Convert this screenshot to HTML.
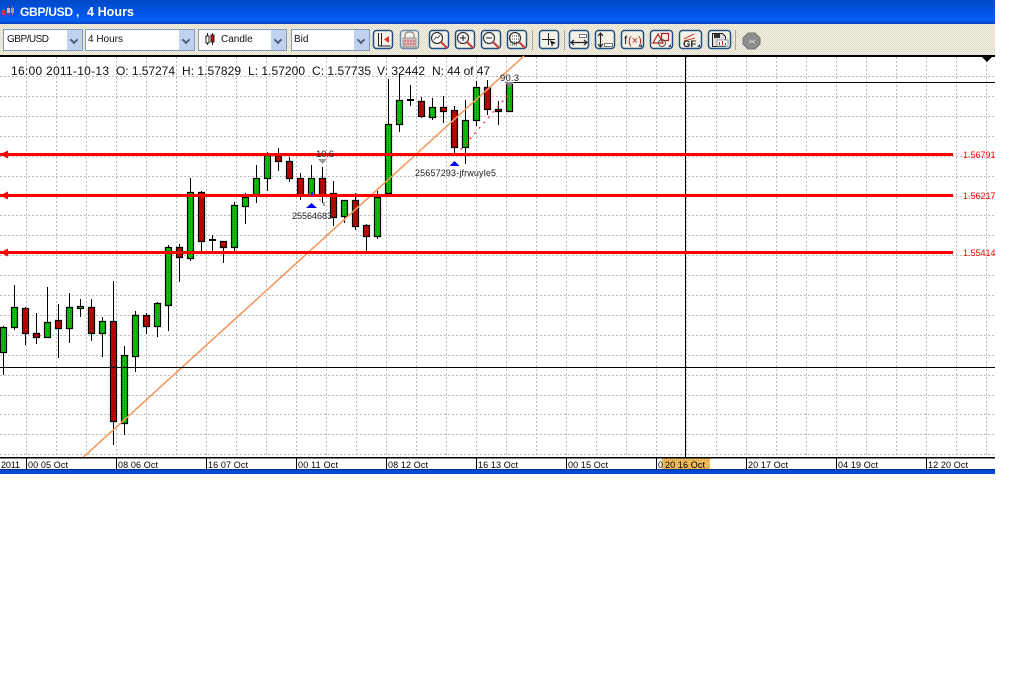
<!DOCTYPE html>
<html><head><meta charset="utf-8"><style>
html,body{margin:0;padding:0;background:#fff;width:1018px;height:689px;overflow:hidden}
#t{position:absolute;left:0;top:0;width:995px;height:24px;background:linear-gradient(#0048c8 0,#0050dc 8px,#0058ee 16px,#0a60f4 20px,#0040c0 24px)}
#b{position:absolute;left:0;top:24px;width:995px;height:31px;background:repeating-conic-gradient(#f6f3e6 0 25%,#dedac8 0 50%) 0 0/2px 2px;border-bottom:1px solid #999}
svg{position:absolute;left:0;top:0}
text{font-family:"Liberation Sans",sans-serif}
.c{position:absolute;top:29px;height:20px;background:#fff;border:1px solid #7f9db9;font:10px/20px "Liberation Sans",sans-serif;color:#111;padding-left:2px;box-sizing:content-box}
.c i{position:absolute;right:0;top:0;width:15px;height:20px;background:#c1d2ee}
.c i:after{content:"";position:absolute;left:4px;top:7px;width:4px;height:4px;border:solid #4d6185;border-width:0 2px 2px 0;transform:rotate(45deg)}
</style></head><body>
<div id="t"></div><div id="b"></div>
<div class="c" style="left:3px;width:75px;padding-left:3px"><span style="letter-spacing:-.5px">GBP/USD</span><i></i></div>
<div class="c" style="left:85px;width:106px">4 Hours<i></i></div>
<div class="c" style="left:198px;width:65px;padding-left:22px">Candle<i></i></div>
<div class="c" style="left:291px;width:75px">Bid<i></i></div>
<svg width="1018" height="689" viewBox="0 0 1018 689">
<defs>
<pattern id="g" width="2" height="2" patternUnits="userSpaceOnUse"><rect width="2" height="2" fill="#00c400"/><rect width="1" height="1" fill="#009a00"/><rect x="1" y="1" width="1" height="1" fill="#00d000"/></pattern>
<pattern id="r" width="2" height="2" patternUnits="userSpaceOnUse"><rect width="2" height="2" fill="#c80000"/><rect width="1" height="1" fill="#980000"/><rect x="1" y="1" width="1" height="1" fill="#d40000"/></pattern>
<pattern id="o" width="2" height="2" patternUnits="userSpaceOnUse"><rect width="2" height="2" fill="#f2c060"/><rect width="1" height="1" fill="#d8a040"/></pattern>
</defs>
<!-- title -->
<g fill="none" stroke-width="1"><path d="M3.500 8v9M8.500 6v9" stroke="#b04040"/><path d="M12.500 6v9" stroke="#888"/></g>
<rect x="2" y="10" width="3" height="5" fill="#e03030"/><rect x="7" y="8" width="3" height="5" fill="#d0b0b0"/><rect x="11" y="8" width="3" height="5" fill="#b0a080"/>
<text x="20" y="16" fill="#fff" font-size="12" font-weight="bold" textLength="53">GBP/USD</text>
<text x="76" y="16" fill="#fff" font-size="12" font-weight="bold">,</text>
<text x="87" y="16" fill="#fff" font-size="12.500" font-weight="bold" textLength="47">4 Hours</text>
<!-- candle icon in combo -->
<path d="M207.500 33v12M212.500 33v12" stroke="#222"/><rect x="206" y="36" width="3" height="7" fill="#fff" stroke="#222"/><rect x="211" y="35" width="3" height="7" fill="#d00000" stroke="#222"/>
<!-- toolbar separators -->
<path d="M532.500 30v20M564.500 30v20M735.500 30v20" stroke="#aaa"/>
<!-- toolbar buttons -->
<g fill="#f4f2e6" stroke="#1f4f86" stroke-width="1.500">
<rect x="373.500" y="30.500" width="19" height="18" rx="3"/><rect x="400.500" y="30.500" width="18" height="18" rx="3" stroke="#6a8cae"/>
<rect x="429.500" y="30.500" width="19" height="18" rx="3"/><rect x="455.500" y="30.500" width="19" height="18" rx="3"/>
<rect x="481.500" y="30.500" width="19" height="18" rx="3"/><rect x="507.500" y="30.500" width="19" height="18" rx="3"/>
<rect x="539.500" y="30.500" width="19" height="18" rx="3"/><rect x="569.500" y="30.500" width="19" height="18" rx="3"/>
<rect x="595.500" y="30.500" width="19" height="18" rx="3"/><rect x="621.500" y="30.500" width="22" height="18" rx="3"/>
<rect x="650.500" y="30.500" width="22" height="18" rx="3"/><rect x="679.500" y="30.500" width="22" height="18" rx="3"/>
<rect x="708.500" y="30.500" width="22" height="18" rx="3"/>
</g>
<!-- icon 1 -->
<path d="M378.500 33v13h12M381.500 33v13" fill="none" stroke="#222"/><path d="M389 36v7l-5-3.500z" fill="#e03030"/>
<!-- lock -->
<path d="M405 38v-3q0-3 4.500-3t4.500 3v3" fill="none" stroke="#999" stroke-width="1.500"/><rect x="403" y="38" width="13" height="9" fill="#d8b8b8" stroke="#999"/><path d="M404 41h11M404 44h11" stroke="#d05050" stroke-dasharray="2 1"/>
<!-- magnifiers -->
<g fill="#fff" stroke="#333" stroke-width="1.200"><circle cx="437" cy="38" r="5.500"/><circle cx="463" cy="38" r="5.500"/><circle cx="489" cy="38" r="5.500"/><circle cx="515" cy="38" r="5.500"/></g>
<g stroke="#d04040" stroke-width="2.200"><path d="M441 42l6 6M467 42l6 6M493 42l6 6M519 42l6 6"/></g>
<path d="M434 40l2-3 2 1 2-3" fill="none" stroke="#555"/>
<path d="M460 38h6M463 35v6M486 38h6" stroke="#111"/>
<path d="M510 36h10M510 39h10M510 42h10M510 45h8" stroke="#333" stroke-dasharray="1 1"/>
<!-- crosshair -->
<path d="M548.500 33v12M542 39.500h13" stroke="#222"/><path d="M550 40l6 3-3 1-1 3z" fill="#222"/>
<!-- h/v -->
<path d="M571 42.500h16M574 40l-3 2.500 3 2.500M584 40l3 2.500-3 2.500" fill="none" stroke="#222" stroke-width="1.200"/><rect x="579.500" y="34.500" width="7" height="3" fill="#fff" stroke="#777"/>
<path d="M600.500 33v14M598 36l2.500-3 2.500 3M598 44l2.500 3 2.500-3" fill="none" stroke="#222" stroke-width="1.200"/><rect x="604.500" y="43.500" width="8" height="3" fill="#fff" stroke="#777"/>
<text x="624" y="44" font-size="12" fill="#222">f</text><text x="628" y="44" font-size="11" fill="#b02020">(×)</text>
<path d="M642 47v-3l-3 3zM671 47v-3l-3 3zM700 47v-3l-3 3z" fill="#345"/>
<!-- shapes -->
<path d="M658 34l-5 9h10z" fill="none" stroke="#b02020" stroke-width="1.200"/><rect x="661.500" y="33.500" width="7" height="7" fill="none" stroke="#b02020" stroke-width="1.200"/><circle cx="662" cy="43" r="3.500" fill="none" stroke="#555"/>
<!-- GF -->
<path d="M684 39l10-5M684 41l11-3" stroke="#d04040"/><text x="683" y="47" font-size="9.500" font-weight="bold" fill="#222">GF</text>
<!-- save -->
<path d="M712.500 33.500h10l3 3v10h-13z" fill="#ddd" stroke="#222"/><rect x="714" y="34" width="6" height="4" fill="#333"/><rect x="717" y="40" width="11" height="6" fill="#fff" stroke="#999"/><path d="M719.500 45v-3M722.500 45v-4M725.500 45v-2" stroke="#d02020"/>
<!-- stop -->
<path d="M748 33h7l5 5v6l-5 5h-7l-5-5v-6z" fill="#8e8e8e" stroke="#777"/><path d="M749 40l3 2 3-2M749 43l3-2 3 2" fill="none" stroke="#ccc"/>

<!-- chart top -->
<rect x="0" y="55" width="995" height="2" fill="#000"/>
<!-- grid -->
<path d="M26.500 57V457M56.500 57V457M86.500 57V457M116.500 57V457M146.500 57V457M176.500 57V457M206.500 57V457M236.500 57V457M266.500 57V457M296.500 57V457M326.500 57V457M356.500 57V457M386.500 57V457M416.500 57V457M446.500 57V457M476.500 57V457M506.500 57V457M536.500 57V457M566.500 57V457M596.500 57V457M626.500 57V457M656.500 57V457M686.500 57V457M716.500 57V457M746.500 57V457M776.500 57V457M806.500 57V457M836.500 57V457M866.500 57V457M896.500 57V457M926.500 57V457M956.500 57V457M986.500 57V457" stroke="#bcbcbc" stroke-dasharray="2 2"/>
<path d="M0 76.500H994M0 96.500H994M0 116.500H994M0 136.500H994M0 156.500H994M0 176.500H994M0 196.500H994M0 215.500H994M0 235.500H994M0 255.500H994M0 275.500H994M0 295.500H994M0 315.500H994M0 335.500H994M0 355.500H994M0 375.500H994M0 395.500H994M0 414.500H994M0 434.500H994M0 454.500H994" stroke="#bcbcbc" stroke-dasharray="2 2"/>
<!-- wicks -->
<path stroke="#000" fill="none" d="M3.500 326V375M14.500 285V330M25.500 307V345M36.500 313V344M47.500 287V337M58.500 304V358M69.500 293V343M80.500 299V317M91.500 299V341M102.500 317V357M113.500 281V445M124.500 346V435M135.500 311V372M146.500 313V334M157.500 302V337M168.500 245V331M179.500 244V282M190.500 178V261M201.500 191V252M212.500 235V252M223.500 241V263M234.500 202V252M245.500 193V224M256.500 165V203M267.500 152V191M278.500 148V171M289.500 157V182M300.500 173V200M311.500 165V195M322.500 167V203M333.500 181V226M344.500 200V223M355.500 193V230M366.500 224V251M377.500 191V239M388.500 79V193M399.500 73V132M410.500 85V106M421.500 97V118M432.500 98V120M443.500 96V123M454.500 106V153M465.500 100V164M476.500 81V126M487.500 80V115M498.500 101V125M509.500 83V111"/>
<!-- green bodies -->
<path fill="url(#g)" stroke="#000" stroke-width="1.200" d="M0.500 327.500h6V352.500h-6zM11.500 307.500h6V327.500h-6zM44.500 322.500h6V337.500h-6zM66.500 307.500h6V328.500h-6zM77.500 306.500h6V308.500h-6zM99.500 321.500h6V333.500h-6zM121.500 355.500h6V423.500h-6zM132.500 315.500h6V356.500h-6zM154.500 303.500h6V326.500h-6zM165.500 247.500h6V305.500h-6zM187.500 192.500h6V258.500h-6zM231.500 205.500h6V247.500h-6zM242.500 197.500h6V206.500h-6zM253.500 178.500h6V194.500h-6zM264.500 155.500h6V178.500h-6zM308.500 178.500h6V195.500h-6zM341.500 200.500h6V216.500h-6zM374.500 197.500h6V236.500h-6zM385.500 124.500h6V193.500h-6zM396.500 100.500h6V124.500h-6zM429.500 107.500h6V117.500h-6zM462.500 120.500h6V147.500h-6zM473.500 87.500h6V120.500h-6zM506.500 84.500h6V111.500h-6z"/>
<!-- red bodies -->
<path fill="url(#r)" stroke="#000" stroke-width="1.200" d="M22.500 308.500h6V333.500h-6zM33.500 333.500h6V337.500h-6zM55.500 320.500h6V328.500h-6zM88.500 307.500h6V333.500h-6zM110.500 321.500h6V421.500h-6zM143.500 315.500h6V326.500h-6zM176.500 247.500h6V257.500h-6zM198.500 192.500h6V241.500h-6zM220.500 241.500h6V247.500h-6zM275.500 155.500h6V161.500h-6zM286.500 161.500h6V178.500h-6zM297.500 178.500h6V195.500h-6zM319.500 178.500h6V194.500h-6zM330.500 193.500h6V217.500h-6zM352.500 200.500h6V226.500h-6zM363.500 225.500h6V236.500h-6zM418.500 101.500h6V116.500h-6zM440.500 107.500h6V111.500h-6zM451.500 110.500h6V147.500h-6zM484.500 87.500h6V109.500h-6zM495.500 109.500h6V111.500h-6z"/>
<!-- doji -->
<rect x="209" y="239" width="7" height="2" fill="#000"/><rect x="407" y="99" width="7" height="2" fill="#000"/>
<!-- trend -->
<path d="M83.500 457L524 56" stroke="#f49a60" stroke-width="1.600" fill="none"/>
<path d="M456 155L508 95" stroke="#f04050" stroke-width="1.500" stroke-dasharray="2 5" fill="none"/>
<path d="M312 196L326 203" stroke="#e05050" stroke-width="1" stroke-dasharray="2 6" fill="none"/>
<!-- crosshair -->
<path d="M0 367.500H995M685.500 57V457M505 82.500H995" stroke="#000"/>
<!-- red lines -->
<path d="M0 154.500H953M0 195.500H953M0 252.500H953" stroke="#ff0000" stroke-width="3"/>
<path d="M0 154.500l8-4v8zM0 195.500l8-4v8zM0 252.500l8-4v8z" fill="#ff0000"/>
<g fill="#ff0000" font-size="9"><text x="963" y="158">1.56791</text><text x="963" y="199">1.56217</text><text x="963" y="256">1.55414</text></g>
<!-- markers -->
<path d="M449.500 166l5-5 5 5z" fill="#0000f0"/><path d="M306 208l5.500-5 5.500 5z" fill="#0000f0"/>
<path d="M318 159h9l-4.500 5z" fill="#999"/><path d="M505 82h9l-4.500 6z" fill="#888"/>
<path d="M312 192v4" stroke="#3030d0" stroke-width="2"/><path d="M324 202v4" stroke="#aaa" stroke-width="2"/>
<g fill="#222" font-size="9.500">
<text x="316" y="157" textLength="18">10.6</text>
<text x="500" y="81" textLength="19">90.3</text>
<text x="292" y="219" textLength="40" font-size="9">25564683</text>
<text x="415" y="176" textLength="81" font-size="9">25657293-jfrwuyle5</text>
</g>
<!-- info -->
<g fill="#111" font-size="12">
<text x="11" y="75" textLength="98">16:00 2011-10-13</text>
<text x="116" y="75" textLength="59">O: 1.57274</text>
<text x="182" y="75" textLength="59">H: 1.57829</text>
<text x="248" y="75" textLength="57">L: 1.57200</text>
<text x="312" y="75" textLength="59">C: 1.57735</text>
<text x="377" y="75" textLength="48">V: 32442</text>
<text x="432" y="75" textLength="58">N: 44 of 47</text>
</g>
<!-- top-right arrow -->
<path d="M982 57h10l-5 5z" fill="#000"/>
<!-- axis -->
<rect x="0" y="457" width="995" height="12" fill="#fff"/>
<rect x="662" y="458" width="48" height="11" fill="url(#o)"/>
<rect x="0" y="457" width="995" height="1.500" fill="#000"/>
<path d="M26.500 458v11M116.500 458v11M206.500 458v11M296.500 458v11M386.500 458v11M476.500 458v11M566.500 458v11M656.500 458v11M746.500 458v11M836.500 458v11M926.500 458v11" stroke="#000"/>
<g fill="#000" font-size="9">
<text x="1" y="468" textLength="19">2011</text>
<text x="28" y="468" textLength="40">00 05 Oct</text>
<text x="118" y="468" textLength="40">08 06 Oct</text>
<text x="208" y="468" textLength="40">16 07 Oct</text>
<text x="298" y="468" textLength="40">00 11 Oct</text>
<text x="388" y="468" textLength="40">08 12 Oct</text>
<text x="478" y="468" textLength="40">16 13 Oct</text>
<text x="568" y="468" textLength="40">00 15 Oct</text>
<text x="658" y="468">0</text>
<text x="665" y="468" textLength="40">20 16 Oct</text>
<text x="748" y="468" textLength="40">20 17 Oct</text>
<text x="838" y="468" textLength="40">04 19 Oct</text>
<text x="928" y="468" textLength="40">12 20 Oct</text>
</g>
<rect x="0" y="469" width="995" height="5" fill="#0048d0"/>
<rect x="0" y="469" width="995" height="1" fill="#003090"/>
</svg>
</body></html>
